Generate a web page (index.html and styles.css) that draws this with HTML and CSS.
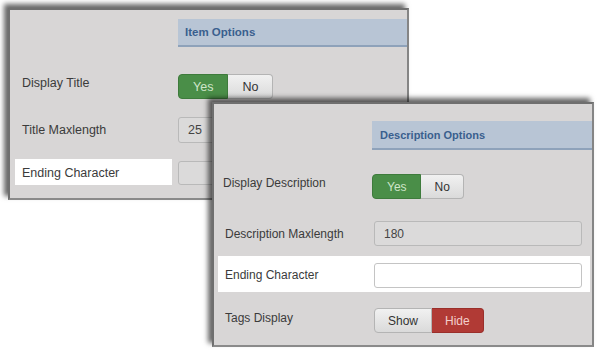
FILE: index.html
```html
<!DOCTYPE html>
<html lang="en">
<head>
    <meta charset="UTF-8">
    <meta name="viewport" content="width=device-width, initial-scale=1.0">
    <title>Item Options</title>
    <link rel="stylesheet" href="styles.css">
</head>
<body>
    <div class="win win-item">
        <div class="head"><span class="head-cell">Item Options</span></div>

        <div class="row r1">
            <label class="lbl">Display Title</label>
            <div class="toggle">
                <button class="btn yes">Yes</button><button class="btn plain">No</button>
            </div>
        </div>

        <div class="row r2">
            <label class="lbl">Title Maxlength</label>
            <input class="field" type="text" value="25">
        </div>

        <div class="row r3">
            <label class="lbl lit">Ending Character</label>
            <input class="field" type="text">
        </div>
    </div>

    <div class="win win-desc">
        <div class="head"><span class="head-cell">Description Options</span></div>

        <div class="row r1">
            <label class="lbl">Display Description</label>
            <div class="toggle">
                <button class="btn yes">Yes</button><button class="btn plain">No</button>
            </div>
        </div>

        <div class="row r2">
            <label class="lbl">Description Maxlength</label>
            <input class="field" type="text" value="180">
        </div>

        <div class="row r3 lit">
            <label class="lbl">Ending Character</label>
            <input class="field white" type="text">
        </div>

        <div class="row r4">
            <label class="lbl">Tags Display</label>
            <div class="toggle">
                <button class="btn plain">Show</button><button class="btn hide">Hide</button>
            </div>
        </div>
    </div>
</body>
</html>
```

FILE: styles.css
```css
body { margin: 0; background: #fff; font-family: "Liberation Sans", Arial, sans-serif; color: #3b3b3b; }

/* the two screenshots sit on a blank canvas */
.win { position: absolute; background: #d8d6d6; border: 2px solid #6f6f6f; border-bottom-color: #8a8a8a; border-right-color: #858585; box-shadow: -4px -4px 5px rgba(0, 0, 0, 0.6); overflow: hidden; box-sizing: border-box; }
.win-item { left: 8px; top: 8px; width: 401px; height: 192px; font-size: 12.5px; }
.win-desc { left: 212px; top: 102px; width: 382px; height: 245px; font-size: 12px; }

.head { display: flex; }
.head-cell { flex: 1; background: #b8c5d5; border-bottom: 2px solid #8ea2ba; color: #3a5f8e; font-weight: bold; box-sizing: border-box; }

.row { display: flex; align-items: flex-start; }
.lbl { display: block; line-height: 16px; box-sizing: border-box; }

.toggle { display: flex; }
.btn { font: inherit; height: 25px; padding: 0 13px; border: 1px solid #b4b4b4; background: linear-gradient(#f1f1f1, #dadada); color: #333; margin: 0; cursor: pointer; }
.btn:first-child { border-radius: 4px 0 0 4px; }
.btn:last-child { border-radius: 0 4px 4px 0; border-left: none; }
.btn.yes { background: #4a8e48; border-color: #3e7b3c; color: #cfe5c9; }
.btn.hide { background: #b13a35; border-color: #9a2f2b; color: #f3cfcc; }

.field { font: inherit; color: #444; background: #dbdada; border: 1px solid #b9b9b9; border-radius: 3px; padding: 0 9px; box-sizing: border-box; margin: 0; }
.field.white { background: #fff; border-color: #c4c4c4; }

/* window one: Item Options */
.win-item .head { margin-top: 9px; padding-left: 168px; }
.win-item .head-cell { height: 28px; line-height: 27px; padding-left: 7px; font-size: 11.5px; }
.win-item .lbl { width: 168px; padding-left: 12px; }
.win-item .r1 { margin-top: 27px; }
.win-item .r1 .lbl { padding-top: 1px; }
.win-item .r1 .btn { padding: 0 14px; }
.win-item .r2 { margin-top: 18px; }
.win-item .r2 .lbl { padding-top: 5px; }
.win-item .field { width: 200px; height: 26px; }
.win-item .r3 { margin-top: 16px; }
.win-item .lbl.lit { background: #fff; width: 157px; margin-left: 5px; margin-right: 6px; padding-left: 7px; padding-top: 1px; height: 26px; line-height: 26px; }
.win-item .r3 .field { height: 24px; margin-top: 2px; }

/* window two: Description Options */
.win-desc .head { margin-top: 17px; padding-left: 158px; }
.win-desc .head-cell { height: 29px; line-height: 28px; padding-left: 8px; font-size: 11px; }
.win-desc .lbl { width: 160px; padding-left: 11px; }
.win-desc .r1 { margin-top: 24px; }
.win-desc .r1 .lbl { width: 158px; padding-left: 9px; padding-top: 1px; }
.win-desc .r1 .btn { padding: 0 13px 0 14px; }
.win-desc .field { width: 208px; height: 25px; }
.win-desc .r2 { margin-top: 22px; }
.win-desc .r2 .lbl { padding-top: 5px; }
.win-desc .r3 { margin: 10px 2px 0 4px; height: 36px; background: #fff; }
.win-desc .r3 .lbl { width: 156px; padding-left: 7px; padding-top: 11px; }
.win-desc .r3 .field { margin-top: 7px; }
.win-desc .r4 { margin-top: 16px; }
.win-desc .r4 .lbl { padding-top: 2px; }
.win-desc .r4 .btn { padding: 0 13px; }
```
